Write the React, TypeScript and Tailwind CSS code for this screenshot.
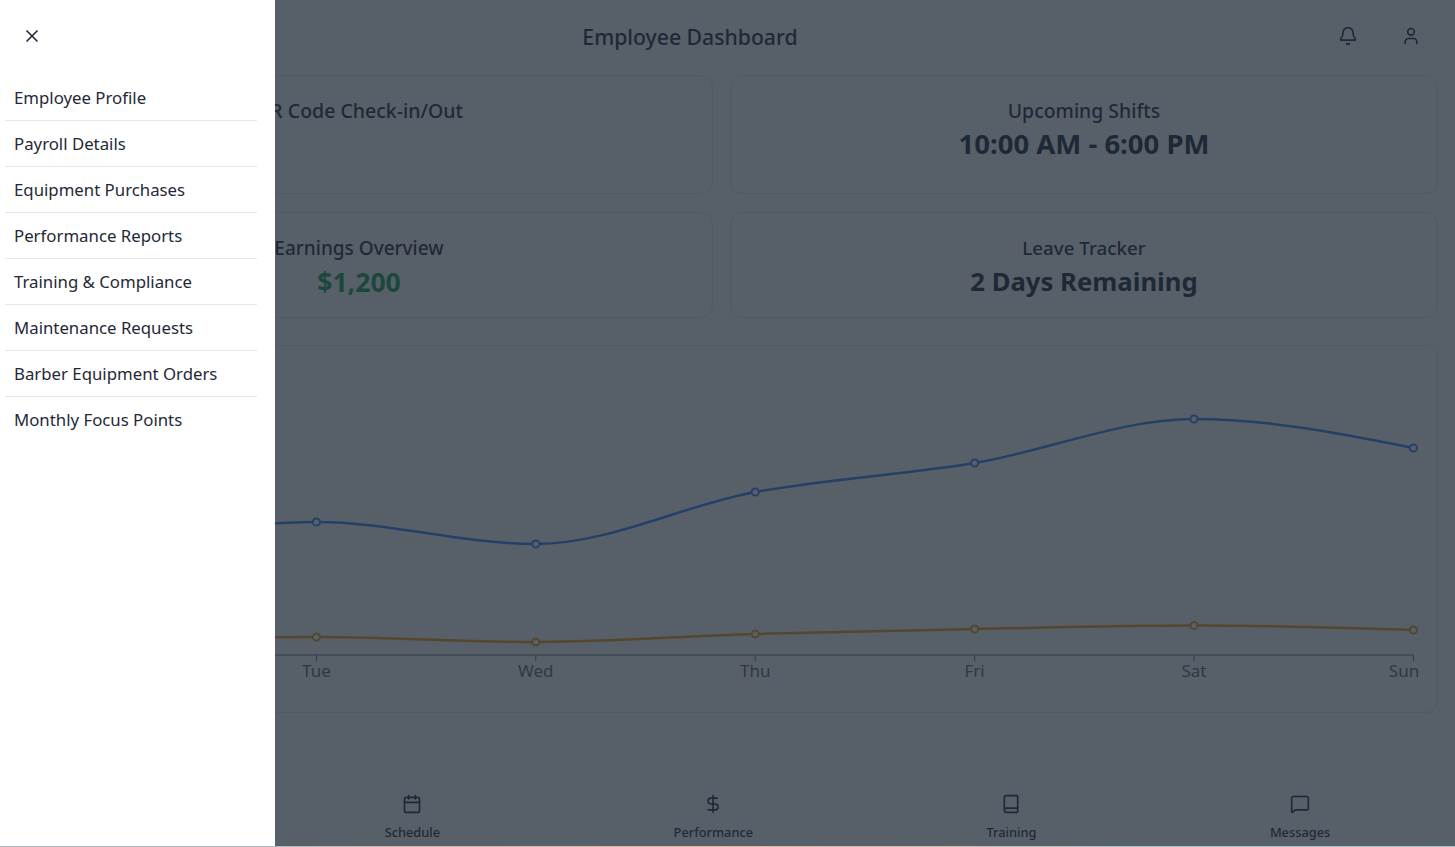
import { X, Bell, User, Calendar, DollarSign, Book, MessageSquare, Home } from "lucide-react";

const FONT = "font-['Noto_Sans','Open_Sans',sans-serif]";
const menu = ["Employee Profile", "Payroll Details", "Equipment Purchases", "Performance Reports", "Training & Compliance", "Maintenance Requests", "Barber Equipment Orders", "Monthly Focus Points"];
const xs = [97, 316.4, 535.8, 755.2, 974.6, 1194, 1413.4];
const blue = [545, 522, 544, 492, 463, 419, 448];
const gold = [640, 637, 642, 634, 629, 625.5, 630];

function monotone(x: number[], y: number[]) {
  const n = x.length;
  const s: number[] = [];
  for (let i = 0; i < n - 1; i++) s.push((y[i + 1] - y[i]) / (x[i + 1] - x[i]));
  const t: number[] = new Array(n).fill(0);
  for (let i = 1; i < n - 1; i++) {
    const h0 = x[i] - x[i - 1];
    const h1 = x[i + 1] - x[i];
    const p = (s[i - 1] * h1 + s[i] * h0) / (h0 + h1);
    t[i] = (Math.sign(s[i - 1]) + Math.sign(s[i])) * Math.min(Math.abs(s[i - 1]), Math.abs(s[i]), 0.5 * Math.abs(p)) || 0;
  }
  t[0] = (3 * s[0] - t[1]) / 2;
  t[n - 1] = (3 * s[n - 2] - t[n - 2]) / 2;
  let d = `M${x[0]},${y[0]}`;
  for (let i = 0; i < n - 1; i++) {
    const h = (x[i + 1] - x[i]) / 3;
    d += `C${x[i] + h},${y[i] + h * t[i]},${x[i + 1] - h},${y[i + 1] - h * t[i + 1]},${x[i + 1]},${y[i + 1]}`;
  }
  return d;
}

function Series({ ys, color }: { ys: number[]; color: string }) {
  return (
    <g>
      <path d={monotone(xs, ys)} fill="none" stroke={color} strokeWidth={2.5} />
      {xs.map((x, i) => (
        <circle key={x} cx={x} cy={ys[i]} r={3.6} fill="#ffffff" stroke={color} strokeWidth={2} />
      ))}
    </g>
  );
}

function Chart() {
  const labels = ["Mon", "Tue", "Wed", "Thu", "Fri", "Sat", "Sun"];
  return (
    <svg width="1433" height="368" viewBox="5 345 1433 368" className="block">
      <line x1="97" y1="655" x2="1413.4" y2="655" stroke="#666666" />
      {xs.map((x, i) => (
        <g key={x}>
          <line x1={x} y1="655" x2={x} y2="661" stroke="#666666" />
          <text x={i === 6 ? 1404 : x} y="677" textAnchor="middle" fill="#666666" fontSize="17" fontFamily="Noto Sans, sans-serif">{labels[i]}</text>
        </g>
      ))}
      <Series ys={blue} color="#3b82f6" />
      <Series ys={gold} color="#f59e0b" />
    </svg>
  );
}

function Card({ title, titleClass, value, valueClass, className }: { title: string; titleClass: string; value?: string; valueClass?: string; className: string }) {
  return (
    <div className={`bg-white border border-gray-200 rounded-xl flex flex-col items-center pt-[21px] ${className}`}>
      <div className={`leading-[28px] font-medium text-[#1f2937] ${titleClass}`}>{title}</div>
      {value && <div className={`leading-[36px] font-bold ${valueClass}`}>{value}</div>}
    </div>
  );
}

function NavItem({ icon, label, className = "" }: { icon: React.ReactNode; label: string; className?: string }) {
  return (
    <div className={`flex flex-col items-center gap-[9px] text-[#1f2937] ${className}`}>
      {icon}
      <span className="text-[12.8px] leading-[18px] font-medium">{label}</span>
    </div>
  );
}

export default function App() {
  return (
    <div className={`${FONT} relative h-[847px] w-[1455px] overflow-hidden bg-white flex flex-col`}>
      <header className="h-[75px] flex items-center justify-between pl-[20px] pr-[34px] shrink-0">
        <div className="w-[20px]" />
        <h1 className="text-[21.2px] font-medium text-[#1f2937] ml-[2px] -mt-[2px]">Employee Dashboard</h1>
        <div className="flex items-center gap-[43px] text-[#1f2937] -mt-[3px]">
          <Bell size={20} strokeWidth={2} />
          <User size={20} strokeWidth={2} />
        </div>
      </header>
      <main className="pl-[5px] pr-[17px] flex flex-col">
        <div className="grid grid-cols-2 gap-x-[17px]">
          <Card title="QR Code Check-in/Out" titleClass="text-[19.5px]" className="h-[119px]" />
          <Card title="Upcoming Shifts" titleClass="text-[19.4px]" value="10:00 AM - 6:00 PM" valueClass="mt-[1px] text-[27.5px] text-[#1f2937]" className="h-[119px]" />
        </div>
        <div className="grid grid-cols-2 gap-x-[17px] mt-[18px]">
          <Card title="Earnings Overview" titleClass="text-[19px]" value="$1,200" valueClass="mt-[2px] text-[26.6px] text-[#16a34a]" className="h-[106px]" />
          <Card title="Leave Tracker" titleClass="text-[18.8px]" value="2 Days Remaining" valueClass="mt-[2px] text-[25.7px] text-[#1f2937]" className="h-[106px]" />
        </div>
        <div className="mt-[27px] h-[368px] bg-white border border-gray-200 rounded-xl overflow-hidden">
          <div className="-m-px"><Chart /></div>
        </div>
      </main>
      <nav className="mt-auto mb-[6px] flex justify-around pr-[8px]">
        <NavItem icon={<Home size={20} />} label="Home" className="w-[34.5px]" />
        <NavItem icon={<Calendar size={20} />} label="Schedule" />
        <NavItem icon={<DollarSign size={20} />} label="Performance" />
        <NavItem icon={<Book size={20} />} label="Training" />
        <NavItem icon={<MessageSquare size={20} />} label="Messages" />
      </nav>
      <div className="absolute inset-0 bg-[#1f2937]/75" />
      <aside className="absolute left-0 top-0 bottom-0 w-[275px] bg-white">
        <div className="h-[75px] pl-[22px] pt-[26px]">
          <X size={20} strokeWidth={2} className="text-[#1f2937]" />
        </div>
        <ul className="pl-[5px] pr-[18px]">
          {menu.map((m, i) => (
            <li key={m} className={`h-[46px] pl-[9px] flex items-center text-[16.8px] text-[#1f2937] ${i < menu.length - 1 ? "border-b border-gray-200" : ""}`}>{m}</li>
          ))}
        </ul>
      </aside>
      <div className="absolute left-0 right-0 bottom-0 h-px bg-[linear-gradient(90deg,#aeb8bc_0%,#aeb8bc_19%,#c9b5aa_28%,#d8b8a8_50%,#c8bcae_62%,#a8bec2_78%,#a9bcc4_100%)]" />
    </div>
  );
}
